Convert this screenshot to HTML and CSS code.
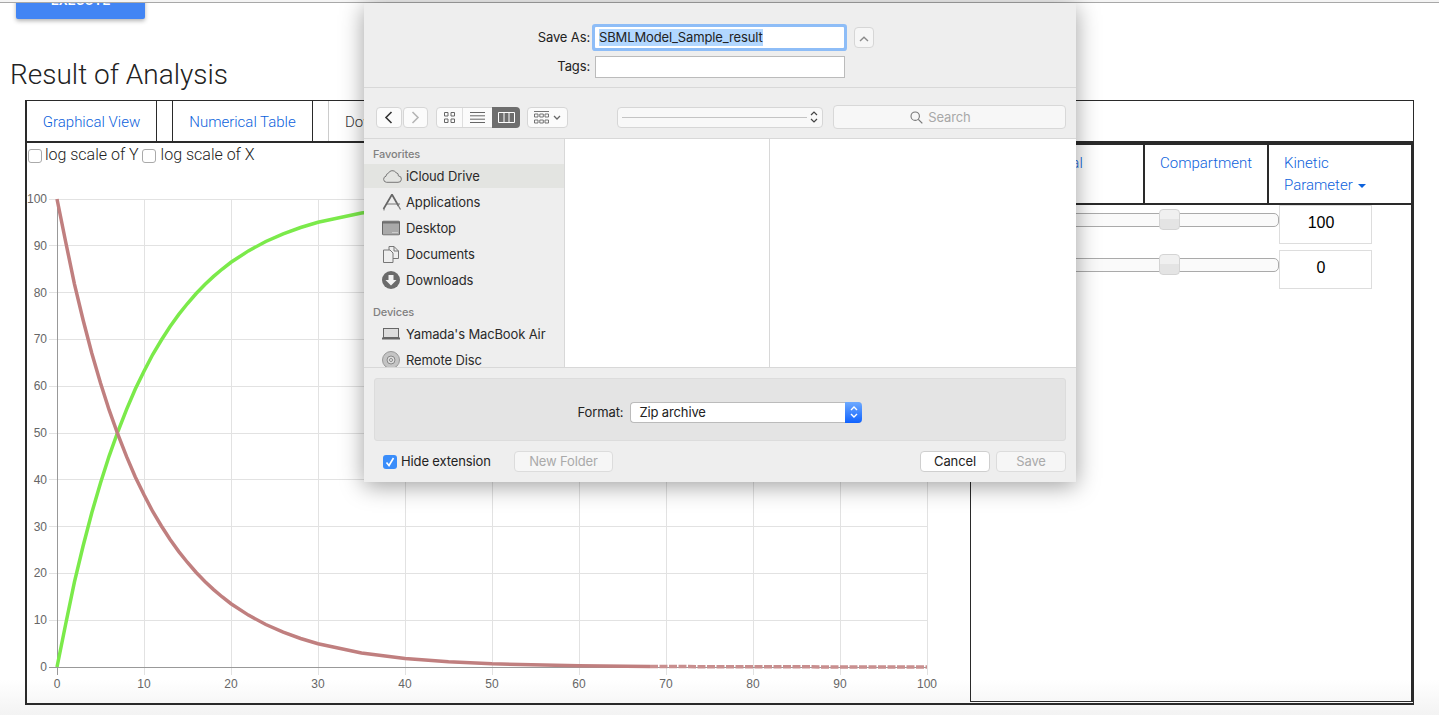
FILE: index.html
```html
<!DOCTYPE html>
<html lang="en">
<head>
  <meta charset="UTF-8" />
  <meta name="viewport" content="width=device-width, initial-scale=1.0"/>
  <title>Result of Analysis</title>
  <link rel="stylesheet" href="styles.css">
</head>
<body>
  <div class="window-edge"></div>
  <div class="page">
    <button class="execute">EXECUTE</button>
    <h1>Result of Analysis</h1>

    <div class="result">
      <div class="result-tabs">
        <a class="result-tab tab-graph">Graphical View</a>
        <a class="result-tab tab-table">Numerical Table</a>
        <a class="result-tab tab-download">Download</a>
      </div>

      <div class="result-body">
        <div class="graph-pane">
          <div class="log-options">
            <label><input type="checkbox"> log scale of Y</label>
            <label><input type="checkbox"> log scale of X</label>
          </div>
          <!-- viewBox uses page coordinates, x: 57 + 8.7t, y: 667 - 4.68v -->
          <svg class="chart" viewBox="27 170 943 533" width="943" height="533">
            <g class="grid">
              <path d="M49 199H927M49 245.8H927M49 292.6H927M49 339.4H927M49 386.2H927M49 433H927M49 479.8H927M49 526.6H927M49 573.4H927M49 620.2H927"/>
              <path d="M144 199V675M231 199V675M318 199V675M405 199V675M492 199V675M579 199V675M666 199V675M753 199V675M840 199V675M927 199V675"/>
            </g>
            <path class="axis" d="M49 667H927M57 199V675"/>
            <polyline class="line-green" points="57,667 65.700,624 74.400,582.200 83.100,546 91.800,512.700 100.500,483 109.200,455.800 117.900,431.500 126.600,409.300 135.300,389 144,371.200 152.700,354.500 161.400,340 170.100,326.500 178.800,314.400 187.500,303.500 196.200,293.500 204.900,284.500 213.600,276.400 222.300,269 231,262.300 248.400,250.900 265.800,241.500 283.200,233.800 300.600,227.500 318,222.300 361.500,213.100 405,207.600 492,202.200 579,200.200 753,199.200 927,199"/>
            <polyline class="line-red" points="57,199 65.700,242 74.400,283.800 83.100,320 91.800,353.300 100.500,383 109.200,410.200 117.900,434.500 126.600,456.700 135.300,477 144,494.800 152.700,511.500 161.400,526 170.100,539.500 178.800,551.600 187.500,562.500 196.200,572.500 204.900,581.500 213.600,589.600 222.300,597 231,603.700 248.400,615.100 265.800,624.500 283.200,632.200 300.600,638.500 318,643.700 361.500,652.900 405,658.400 448.500,661.800 492,663.800 579,665.800 650,666.500"/>
            <polyline class="line-red-tail" points="650,666.500 753,666.800 927,667"/>
            <g class="tick-y">
              <text x="47" y="203">100</text>
              <text x="47" y="250">90</text>
              <text x="47" y="297">80</text>
              <text x="47" y="343">70</text>
              <text x="47" y="390">60</text>
              <text x="47" y="437">50</text>
              <text x="47" y="484">40</text>
              <text x="47" y="531">30</text>
              <text x="47" y="577">20</text>
              <text x="47" y="624">10</text>
              <text x="47" y="671">0</text>
            </g>
            <g class="tick-x">
              <text x="57" y="688">0</text>
              <text x="144" y="688">10</text>
              <text x="231" y="688">20</text>
              <text x="318" y="688">30</text>
              <text x="405" y="688">40</text>
              <text x="492" y="688">50</text>
              <text x="579" y="688">60</text>
              <text x="666" y="688">70</text>
              <text x="753" y="688">80</text>
              <text x="840" y="688">90</text>
              <text x="927" y="688">100</text>
            </g>
          </svg>
        </div>

        <div class="param-pane">
          <div class="param-tabs">
            <a class="param-tab tab-species">Species</a>
            <a class="param-tab tab-global">Global</a>
            <a class="param-tab tab-compartment">Compartment</a>
            <a class="param-tab tab-kinetic">Kinetic<br>Parameter <span class="caret"></span></a>
          </div>
          <div class="param-row">
            <div class="slider"><span class="thumb"></span></div>
            <div class="param-value">100</div>
          </div>
          <div class="param-row">
            <div class="slider"><span class="thumb"></span></div>
            <div class="param-value">0</div>
          </div>
        </div>
      </div>
    </div>
  </div>

  <!-- mac save sheet, sits over the page -->
  <div class="sheet">
    <div class="save-fields">
      <div class="field-row">
        <label class="field-label">Save As:</label>
        <div class="field-input focused"><span class="selected">SBMLModel_Sample_result</span></div>
        <button class="disclosure">
          <svg width="10" height="6" viewBox="0 0 10 6"><path d="M1 5L5 1.2L9 5" fill="none" stroke="#8a8a8a" stroke-width="1.4"/></svg>
        </button>
      </div>
      <div class="field-row">
        <label class="field-label">Tags:</label>
        <div class="field-input"></div>
      </div>
    </div>

    <div class="toolbar">
      <div class="btn-pair">
        <button class="tool-btn nav-btn">
          <svg width="9" height="13" viewBox="0 0 9 13"><path d="M7.5 1L2 6.5L7.5 12" fill="none" stroke="#333" stroke-width="1.6"/></svg>
        </button>
        <button class="tool-btn nav-btn">
          <svg width="9" height="13" viewBox="0 0 9 13"><path d="M1.5 1L7 6.5L1.5 12" fill="none" stroke="#b5b5b5" stroke-width="1.6"/></svg>
        </button>
      </div>
      <div class="view-switch">
        <span class="view-cell cell-icons">
          <svg width="11" height="11" viewBox="0 0 11 11"><path d="M.5.5h3.5v3.5H.5zM7 .5h3.5v3.5H7zM.5 7h3.5v3.5H.5zM7 7h3.5v3.5H7z" fill="none" stroke="#666"/></svg>
        </span>
        <span class="view-cell cell-list">
          <svg width="15" height="11" viewBox="0 0 15 11"><path d="M0 .5h15M0 3.8h15M0 7.2h15M0 10.5h15" stroke="#666"/></svg>
        </span>
        <span class="view-cell cell-columns">
          <svg width="17" height="11" viewBox="0 0 17 11"><path d="M.5.5h16v10H.5zM6 .5v10M11 .5v10" fill="none" stroke="#fff"/></svg>
        </span>
      </div>
      <button class="tool-btn arrange-btn">
        <svg width="15" height="13" viewBox="0 0 15 13"><path d="M0 .5h15M.5 3h3.5v3H.5zM5.8 3h3.5v3H5.8zM11 3h3.5v3H11zM.5 9h3.5v3H.5zM5.8 9h3.5v3H5.8zM11 9h3.5v3H11z" fill="none" stroke="#666" stroke-width=".9"/></svg>
        <svg width="8" height="5" viewBox="0 0 8 5"><path d="M1 1l3 3 3-3" fill="none" stroke="#666" stroke-width="1.3"/></svg>
      </button>
      <div class="path-popup">
        <span class="path-line"></span>
        <svg width="8" height="14" viewBox="0 0 8 14"><path d="M1 5l3-3 3 3M1 9l3 3 3-3" fill="none" stroke="#444" stroke-width="1.2"/></svg>
      </div>
      <div class="search-box">
        <svg width="13" height="13" viewBox="0 0 13 13"><circle cx="5.2" cy="5.2" r="4.2" fill="none" stroke="#777" stroke-width="1.1"/><path d="M8.3 8.3L12.3 12.3" stroke="#777" stroke-width="1.2"/></svg>
        <span>Search</span>
      </div>
    </div>

    <div class="browser">
      <div class="sidebar">
        <div class="side-head">Favorites</div>
        <div class="side-item current">
          <svg class="side-icon" width="20" height="14" viewBox="0 0 20 14"><path d="M4.5 13.3H16A3.2 3.2 0 0 0 16.4 6.9A3 3 0 0 0 14 3.6A4.4 4.4 0 0 0 6.3 4.3A3 3 0 0 0 4 7.2A3.1 3.1 0 0 0 4.5 13.3Z" fill="none" stroke="#777"/></svg>
          iCloud Drive
        </div>
        <div class="side-item">
          <svg class="side-icon" width="20" height="17" viewBox="0 0 20 17"><path d="M10 1L1.500 15.500M10 1L16.500 12.500" fill="none" stroke="#666" stroke-width="1.700"/><path d="M5 10.500H18M16.500 12.500L18.500 16M1 16.500H3" fill="none" stroke="#777" stroke-width="1.200"/></svg>
          Applications
        </div>
        <div class="side-item">
          <svg class="side-icon" width="18" height="15" viewBox="0 0 18 15"><rect x=".5" y=".5" width="17" height="14" rx="1" fill="#a9a9a9" stroke="#666"/><path d="M1 1h16v2H1z" fill="#707070"/><path d="M10.5 12h1M12.5 12h1M14.5 12h1" stroke="#eee"/></svg>
          Desktop
        </div>
        <div class="side-item">
          <svg class="side-icon" width="18" height="18" viewBox="0 0 18 18"><path d="M7 1.5h5l4.5 4.5v7.500H7z" fill="#eee" stroke="#777"/><path d="M12 1.500V6h4.500" fill="none" stroke="#777"/><path d="M1.500 5H8l3 3v9.500H1.500z" fill="#eee" stroke="#777"/></svg>
          Documents
        </div>
        <div class="side-item">
          <svg class="side-icon" width="18" height="18" viewBox="0 0 18 18"><circle cx="9" cy="9" r="9" fill="#6b6b6b"/><path d="M6.500 4h5v5h3L9 14.500 3.500 9h3z" fill="#f2f2f2"/></svg>
          Downloads
        </div>
        <div class="side-head devices">Devices</div>
        <div class="side-item">
          <svg class="side-icon" width="18" height="12" viewBox="0 0 18 12"><rect x="1.500" y=".5" width="15" height="9" fill="#ddd" stroke="#666"/><path d="M0 10.500h18" stroke="#666" stroke-width="2"/></svg>
          Yamada's MacBook Air
        </div>
        <div class="side-item">
          <svg class="side-icon" width="18" height="18" viewBox="0 0 18 18"><circle cx="9" cy="9" r="8.500" fill="#c4c4c4" stroke="#999"/><circle cx="9" cy="9" r="4" fill="#ddd" stroke="#888"/><circle cx="9" cy="9" r="1.500" fill="#eee" stroke="#888"/></svg>
          Remote Disc
        </div>
      </div>
      <div class="column col-first"></div>
      <div class="column"></div>
    </div>

    <div class="sheet-bottom">
      <div class="accessory">
        <label class="format-label">Format:</label>
        <div class="format-select">
          <span class="format-text">Zip archive</span>
          <span class="format-arrows">
            <svg width="8" height="14" viewBox="0 0 8 14"><path d="M1 5l3-3 3 3M1 9l3 3 3-3" fill="none" stroke="#fff" stroke-width="1.400"/></svg>
          </span>
        </div>
      </div>
      <div class="sheet-actions">
        <label class="hide-ext">
          <span class="mac-check">
            <svg width="10" height="10" viewBox="0 0 10 10"><path d="M1.500 5.500L4 8.500L8.500 1" fill="none" stroke="#fff" stroke-width="1.600"/></svg>
          </span>
          Hide extension
        </label>
        <button class="mac-btn new-folder" disabled>New Folder</button>
        <button class="mac-btn cancel">Cancel</button>
        <button class="mac-btn save" disabled>Save</button>
      </div>
    </div>
  </div>
</body>
</html>
```

FILE: styles.css
```css
html, body {
  height: 100%;
}

body {
  margin: 0;
  overflow: hidden;
  font-family: Roboto, sans-serif;
  background: linear-gradient(#fff 680px, #f3f3f3 715px);
}

.window-edge {
  height: 2px;
  background: #f4f4f4;
  border-bottom: 1px solid #a8a8a8;
}

.page {
  overflow: hidden;
  height: 712px;
}

.execute {
  display: block;
  width: 129px;
  height: 38px;
  margin: -22px 0 0 16px;
  padding: 0;
  border: none;
  border-radius: 2px;
  background: #4285f4;
  color: #fff;
  font: 500 14px Roboto, sans-serif;
  box-shadow: 0 2px 4px rgba(0, 0, 0, 0.3);
}

h1 {
  margin: 38px 0 7px 10px;
  font-size: 28px;
  font-weight: 300;
  line-height: 36px;
  color: #222;
}

/* result box */
.result {
  width: 1389px;
  height: 605px;
  margin-left: 25px;
  box-sizing: border-box;
  border: solid #2a2a2a;
  border-width: 1px 1px 2px 2px;
}

.result-tabs {
  display: flex;
  height: 42px;
  box-sizing: border-box;
  border-bottom: 2px solid #2a2a2a;
}

.result-tab {
  display: block;
  box-sizing: border-box;
  height: 40px;
  font-size: 15px;
  font-weight: 300;
  line-height: 42px;
  color: #0d62dc;
  text-align: center;
  border-right: 1px solid #2a2a2a;
}

.tab-graph {
  width: 130px;
}

.tab-table {
  width: 141px;
  margin-left: 15px;
  border-left: 1px solid #2a2a2a;
}

.tab-download {
  width: 130px;
  margin-left: 15px;
  padding-left: 16px;
  color: #333;
  text-align: left;
  border-left: 1px solid #ccc;
}

.result-body {
  display: flex;
  height: 560px;
}

.graph-pane {
  width: 943px;
}

.log-options {
  display: flex;
  gap: 4px;
  height: 27px;
  font-size: 16px;
  font-weight: 300;
  line-height: 24px;
  color: #222;
}

.log-options input {
  appearance: none;
  width: 14px;
  height: 14px;
  margin: 0 -1px 0 1px;
  vertical-align: -3px;
  background: #fff;
  border: 1px solid #aaa;
  border-radius: 3px;
}

.log-options label + label input {
  margin: 0 1px 0 -1px;
}

.chart {
  display: block;
}

.grid path {
  fill: none;
  stroke: #e2e2e2;
  stroke-width: 1;
  shape-rendering: crispEdges;
}

.axis {
  fill: none;
  stroke: #999;
  stroke-width: 1;
  shape-rendering: crispEdges;
}

.line-green, .line-red, .line-red-tail {
  fill: none;
  stroke-width: 3.5;
}

.line-green {
  stroke: #7bea4a;
}

.line-red {
  stroke: #c07f7f;
}

.line-red-tail {
  stroke: #c98f8f;
  stroke-dasharray: 8 1.5;
}

.tick-y text, .tick-x text {
  font: 12px "Liberation Sans", sans-serif;
  fill: #666;
}

.tick-y text {
  text-anchor: end;
}

.tick-x text {
  text-anchor: middle;
}

/* parameter panel */
.param-pane {
  flex: 1;
  height: 559px;
  box-sizing: border-box;
  border: solid #2a2a2a;
  border-width: 0 2px 1px 1px;
}

.param-tabs {
  display: flex;
  height: 62px;
  box-sizing: border-box;
  border: solid #2a2a2a;
  border-width: 2px 0;
}

.param-tab {
  display: block;
  box-sizing: border-box;
  padding: 7px 0 0 15px;
  font-size: 15px;
  font-weight: 300;
  line-height: 22px;
  color: #0d62dc;
  border-right: 2px solid #2a2a2a;
}

.tab-species {
  width: 55px;
}

.tab-global {
  width: 119px;
}

.tab-compartment {
  width: 124px;
}

.tab-kinetic {
  flex: 1;
  border-right: none;
}

.caret {
  display: inline-block;
  margin-left: 2px;
  vertical-align: 2px;
  border-top: 4px solid #0d62dc;
  border-left: 4px solid transparent;
  border-right: 4px solid transparent;
}

.param-row {
  display: flex;
  align-items: flex-start;
  height: 45px;
  padding-left: 90px;
}

.slider {
  position: relative;
  width: 218px;
  height: 14px;
  margin-top: 8px;
  box-sizing: border-box;
  background: #fafafa;
  border: 1px solid #aaa;
  border-radius: 5px;
}

.thumb {
  position: absolute;
  top: -5px;
  left: 50%;
  width: 21px;
  height: 21px;
  margin-left: -11px;
  box-sizing: border-box;
  background: linear-gradient(#f0f0f0 50%, #e4e4e4 50%);
  border: 1px solid #d4d4d4;
  border-radius: 4px;
}

.param-value {
  width: 93px;
  height: 39px;
  box-sizing: border-box;
  padding: 6px 9px 0 0;
  font: 16px/22px "Liberation Sans", sans-serif;
  color: #000;
  text-align: center;
  border: 1px solid #ddd;
}

/* save sheet */
.sheet {
  position: absolute;
  top: 3px;
  left: 364px;
  width: 712px;
  height: 479px;
  background: #eeeeee;
  font: 13px Inter, "Liberation Sans", sans-serif;
  letter-spacing: -0.13px;
  color: #222;
  box-shadow: 0 4px 22px rgba(0, 0, 0, 0.38);
}

.save-fields {
  height: 85px;
  box-sizing: border-box;
  padding-top: 24px;
  border-bottom: 1px solid #d8d8d8;
}

.field-row {
  display: flex;
  align-items: flex-start;
  gap: 5px;
  margin-bottom: 8px;
}

.field-label {
  width: 226px;
  line-height: 21px;
  text-align: right;
}

.field-input {
  width: 250px;
  height: 22px;
  box-sizing: border-box;
  padding-left: 3px;
  background: #fff;
  border: 1px solid #bbb;
}

.field-input.focused {
  width: 249px;
  height: 21px;
  line-height: 19px;
  border: none;
  padding: 1px 0 0 4px;
  box-shadow: 0 0 0 3px #8ebdf7;
  border-radius: 1px;
}

.selected {
  display: inline-block;
  height: 17px;
  line-height: 17px;
  background: #b2d7ff;
}

.disclosure {
  width: 20px;
  height: 21px;
  margin-left: 5px;
  padding: 0;
  background: #f6f6f6;
  border: 1px solid #d6d6d6;
  border-radius: 4px;
}

.toolbar {
  display: flex;
  align-items: center;
  height: 51px;
  box-sizing: border-box;
  padding: 8px 10px 0 12px;
  border-bottom: 1px solid #d8d8d8;
}

.btn-pair {
  display: flex;
  flex: none;
  gap: 1px;
}

.tool-btn {
  display: flex;
  flex: none;
  align-items: center;
  justify-content: center;
  height: 21px;
  padding: 0;
  background: #fbfbfb;
  border: 1px solid #d6d6d6;
  border-radius: 4px;
}

.nav-btn {
  width: 25.5px;
}

.view-switch {
  display: flex;
  flex: none;
  width: 83px;
  height: 21px;
  margin-left: 8px;
  box-sizing: border-box;
  background: #fbfbfb;
  border: 1px solid #d6d6d6;
  border-radius: 4px;
}

.view-cell {
  display: flex;
  flex: none;
  align-items: center;
  justify-content: center;
}

.cell-icons {
  width: 25px;
  border-right: 1px solid #dedede;
}

.cell-list {
  width: 29px;
}

.cell-columns {
  width: 28px;
  margin: -1px -1px -1px 0;
  background: #6e6e6e;
  border-radius: 0 4px 4px 0;
}

.arrange-btn {
  gap: 4px;
  width: 41px;
  margin-left: 8px;
}

.path-popup {
  display: flex;
  flex: none;
  align-items: center;
  gap: 3px;
  width: 206px;
  height: 21px;
  margin-left: 49px;
  box-sizing: border-box;
  padding: 0 4px;
  background: #f8f8f8;
  border: 1px solid #d6d6d6;
  border-radius: 4px;
}

.path-line {
  flex: 1;
  height: 1px;
  background: #c4c4c4;
}

.search-box {
  display: flex;
  flex: none;
  align-items: center;
  justify-content: center;
  gap: 5px;
  width: 233px;
  height: 24px;
  margin-left: 10px;
  box-sizing: border-box;
  padding-right: 18px;
  color: #a8a8a8;
  background: #f7f7f7;
  border: 1px solid #d8d8d8;
  border-radius: 4px;
}

.browser {
  display: flex;
  height: 228px;
}

.sidebar {
  width: 200px;
  overflow: hidden;
  border-right: 1px solid #d8d8d8;
}

.side-head {
  height: 25px;
  padding-left: 9px;
  font-size: 11px;
  font-weight: 500;
  line-height: 31px;
  color: #808080;
}

.side-head.devices {
  height: 28px;
  line-height: 38px;
}

.side-item {
  display: flex;
  align-items: center;
  height: 26px;
  padding-left: 42px;
  position: relative;
  white-space: nowrap;
  color: #2a2a2a;
}

.side-item.current {
  height: 24px;
  margin-bottom: 1px;
  background: #e3e4e1;
}

.side-icon {
  position: absolute;
  left: 18px;
  top: 50%;
  transform: translateY(-50%);
}

.column {
  flex: 1;
  background: #fff;
}

.col-first {
  flex: none;
  width: 204px;
  border-right: 1px solid #d8d8d8;
}

.sheet-bottom {
  height: 115px;
  box-sizing: border-box;
  padding: 10px 10px 0;
  border-top: 1px solid #d8d8d8;
}

.accessory {
  display: flex;
  align-items: center;
  justify-content: center;
  gap: 7px;
  height: 63px;
  box-sizing: border-box;
  padding-top: 5px;
  background: #e4e4e4;
  border: 1px solid #dcdcdc;
  border-radius: 3px;
}

.format-select {
  display: flex;
  align-items: center;
  width: 232px;
  height: 21px;
  box-sizing: border-box;
  background: #fff;
  border: solid #bbb;
  border-width: 1px 0 1px 1px;
  border-radius: 4px;
}

.format-text {
  flex: 1;
  padding-left: 8px;
}

.format-arrows {
  display: flex;
  align-items: center;
  justify-content: center;
  width: 17px;
  height: 21px;
  background: linear-gradient(#6eaaff, #0f62fe);
  border-radius: 0 4px 4px 0;
}

.sheet-actions {
  display: flex;
  align-items: center;
  height: 21px;
  margin-top: 10px;
  padding-left: 9px;
}

.hide-ext {
  display: flex;
  align-items: center;
  gap: 4px;
  width: 131px;
  margin-top: -1px;
}

.mac-check {
  display: flex;
  align-items: center;
  justify-content: center;
  width: 14px;
  height: 14px;
  margin-top: 1px;
  background: #3a8dfa;
  border-radius: 3px;
}

.mac-btn {
  height: 21px;
  padding: 0 0 2px;
  font: 13px Inter, "Liberation Sans", sans-serif;
  letter-spacing: -0.13px;
  color: #222;
  background: #fff;
  border: 1px solid #cfcfcf;
  border-radius: 4px;
}

.mac-btn:disabled {
  color: #aaa;
  background: #f6f6f6;
  border-color: #dcdcdc;
}

.new-folder {
  width: 99px;
}

.cancel {
  width: 70px;
  margin-left: auto;
}

.save {
  width: 70px;
  margin-left: 6px;
}
```
